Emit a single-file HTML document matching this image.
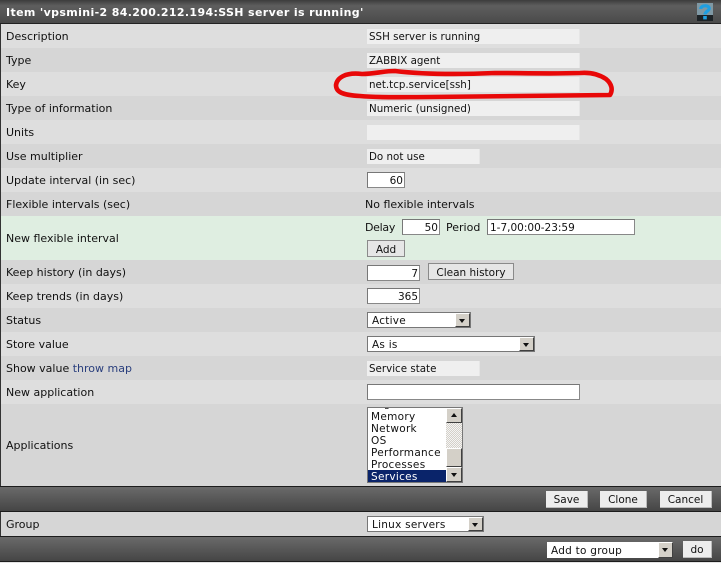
<!DOCTYPE html>
<html><head><meta charset="utf-8"><style>
html,body{margin:0;padding:0;background:#e4e4e4}
body{width:721px;height:563px;position:relative;overflow:hidden;font-family:"DejaVu Sans","Liberation Sans",sans-serif;font-size:11px;color:#111}
div{position:absolute;box-sizing:border-box;white-space:nowrap}
.r{left:1px;width:720px}
.a{background:#dedede}.b{background:#d6d6d6}
.l{left:6px;line-height:14px;margin-top:1px}
.ro{background:#efefef;left:367px;height:15px;line-height:17px;padding-left:2px;font-size:10.3px;border-right:1px solid #e6e6e6}
.in{background:#fff;border:1px solid #777;height:16px;line-height:17px;left:367px;text-align:right;padding-right:1px;font-size:10.5px;border-right-color:#888;border-bottom-color:#888}
.bar{left:0;width:721px;background:linear-gradient(#6a6a6a,#454545);border-top:1px solid #1c1c1c;border-bottom:1px solid #1c1c1c}
.btn{background:#e6e6e6;border:1px solid #8a8a8a;text-align:center;line-height:18px;height:17px;font-size:10.5px}
.bb{background:#ededed;text-align:center;line-height:19px;height:17px;font-size:10.5px;border-right:1px solid #bbb;border-bottom:1px solid #bbb}
.sel{background:#fff;border:1px solid #777;height:16px;line-height:17px;padding-left:4px;font-size:10.5px;letter-spacing:.25px}
.arr{right:0;top:0;width:15px;height:14px;background:#d4d0c8;border-right:1px solid #404040;border-bottom:1px solid #404040;border-top:1px solid #fff;border-left:1px solid #fff}
.arr:after{content:"";position:absolute;left:3px;top:5px;border:3px solid transparent;border-top:4px solid #111;border-bottom:0}
.o{left:3px;height:12px;line-height:12px;font-size:10.5px;letter-spacing:.3px}
</style></head><body>
<div style="left:0;top:0;width:721px;height:24px;background:linear-gradient(#3c3c3c,#5e5e5e 25%,#4a4a4a);border-bottom:1px solid #222"></div>
<div style="left:6px;top:5px;color:#fff;font-weight:bold;font-size:11px;line-height:15px;letter-spacing:.36px">Item 'vpsmini-2 84.200.212.194:SSH server is running'</div>
<svg style="position:absolute;left:695px;top:2px" width="20" height="20" viewBox="0 0 20 20"><rect x="2" y="1" width="16" height="12" fill="#7f98a4"/><rect x="2" y="13" width="16" height="6" fill="#1c2226"/><path d="M5.8 7C5.8 2.8 14.2 2.8 14.2 6.5C14.2 9 10 9.5 10 12.5" fill="none" stroke="#1e9fe2" stroke-width="3.2"/><rect x="8.2" y="14" width="3.6" height="3.4" fill="#1e9fe2"/></svg>

<div class="r a" style="top:24px;height:24px"></div><div class="r b" style="top:48px;height:24px"></div>
<div class="r a" style="top:72px;height:24px"></div><div class="r b" style="top:96px;height:24px"></div>
<div class="r a" style="top:120px;height:24px"></div><div class="r b" style="top:144px;height:24px"></div>
<div class="r a" style="top:168px;height:24px"></div><div class="r b" style="top:192px;height:24px"></div>
<div class="r" style="top:216px;height:44px;background:#dfeee1"></div>
<div class="r b" style="top:260px;height:24px"></div><div class="r a" style="top:284px;height:24px"></div>
<div class="r b" style="top:308px;height:24px"></div><div class="r a" style="top:332px;height:24px"></div>
<div class="r b" style="top:356px;height:24px"></div><div class="r a" style="top:380px;height:24px"></div>
<div class="r b" style="top:404px;height:82px"></div><div class="r b" style="top:511px;height:25px"></div>
<div style="left:0;top:24px;width:1px;height:538px;background:#333"></div>

<div class="l" style="top:29px">Description</div>
<div class="l" style="top:53px">Type</div>
<div class="l" style="top:77px">Key</div>
<div class="l" style="top:101px">Type of information</div>
<div class="l" style="top:125px">Units</div>
<div class="l" style="top:149px">Use multiplier</div>
<div class="l" style="top:173px">Update interval (in sec)</div>
<div class="l" style="top:197px">Flexible intervals (sec)</div>
<div class="l" style="top:231px">New flexible interval</div>
<div class="l" style="top:265px">Keep history (in days)</div>
<div class="l" style="top:289px">Keep trends (in days)</div>
<div class="l" style="top:313px">Status</div>
<div class="l" style="top:337px">Store value</div>
<div class="l" style="top:361px">Show value <span style="color:#2a3f7d">throw map</span></div>
<div class="l" style="top:385px">New application</div>
<div class="l" style="top:438px">Applications</div>
<div class="l" style="top:517px">Group</div>

<div class="ro" style="top:29px;width:213px">SSH server is running</div>
<div class="ro" style="top:53px;width:213px">ZABBIX agent</div>
<div class="ro" style="top:77px;width:213px">net.tcp.service[ssh]</div>
<div class="ro" style="top:101px;width:213px">Numeric (unsigned)</div>
<div class="ro" style="top:125px;width:213px"></div>
<div class="ro" style="top:149px;width:113px">Do not use</div>
<div class="in" style="top:172px;width:38px">60</div>
<div class="l" style="top:197px;left:365px">No flexible intervals</div>
<div class="l" style="top:220px;left:365px;letter-spacing:-.3px">Delay</div>
<div class="in" style="top:219px;left:402px;width:38px">50</div>
<div class="l" style="top:220px;left:446px">Period</div>
<div class="in" style="top:219px;left:487px;width:148px;text-align:left;padding-left:2px">1-7,00:00-23:59</div>
<div class="btn" style="left:367px;top:240px;width:38px">Add</div>
<div class="in" style="top:265px;width:53px">7</div>
<div class="btn" style="left:428px;top:263px;width:86px;line-height:19px">Clean history</div>
<div class="in" style="top:288px;width:53px">365</div>
<div class="sel" style="left:367px;top:312px;width:104px">Active<div class="arr"></div></div>
<div class="sel" style="left:367px;top:336px;width:168px">As is<div class="arr"></div></div>
<div class="ro" style="top:361px;width:113px">Service state</div>
<div class="in" style="top:384px;width:213px"></div>

<div style="left:367px;top:407px;width:96px;height:76px;background:#fff;border:1px solid #777;overflow:hidden">
<div class="o" style="top:-10px">Log files</div>
<div class="o" style="top:3px">Memory</div>
<div class="o" style="top:15px">Network</div>
<div class="o" style="top:27px">OS</div>
<div class="o" style="top:39px">Performance</div>
<div class="o" style="top:51px">Processes</div>
<div style="left:0;top:62px;width:78px;height:12px;background:#0a246a"></div>
<div class="o" style="top:63px;color:#fff">Services</div>
<div style="left:78px;top:0;width:16px;height:74px;background:repeating-conic-gradient(#d4d0c8 0 25%,#f4f4f4 0 50%) 0 0/2px 2px"></div>
<div style="left:78px;top:0;width:16px;height:15px;background:#d4d0c8;border-right:1px solid #404040;border-bottom:1px solid #404040;border-top:1px solid #fff;border-left:1px solid #fff"></div>
<div style="left:83px;top:5px;border:3px solid transparent;border-bottom:4px solid #111;border-top:0"></div>
<div style="left:78px;top:40px;width:16px;height:19px;background:#d4d0c8;border-right:1px solid #404040;border-bottom:1px solid #404040;border-top:1px solid #fff;border-left:1px solid #fff"></div>
<div style="left:78px;top:59px;width:16px;height:15px;background:#d4d0c8;border-right:1px solid #404040;border-bottom:1px solid #404040;border-top:1px solid #fff;border-left:1px solid #fff"></div>
<div style="left:83px;top:65px;border:3px solid transparent;border-top:4px solid #111;border-bottom:0"></div>
</div>

<div class="bar" style="top:486px;height:26px"></div>
<div class="bb" style="left:546px;top:491px;width:42px">Save</div>
<div class="bb" style="left:600px;top:491px;width:47px">Clone</div>
<div class="bb" style="left:660px;top:491px;width:52px">Cancel</div>
<div class="sel" style="left:367px;top:516px;width:117px">Linux servers<div class="arr"></div></div>
<div class="bar" style="top:536px;height:26px"></div>
<div class="sel" style="left:547px;top:542px;width:126px;border:0;line-height:18px">Add to group<div class="arr" style="height:16px"></div></div>
<div class="bb" style="left:683px;top:541px;width:29px">do</div>

<svg style="position:absolute;left:0;top:0" width="721" height="563" viewBox="0 0 721 563"><path d="M362 74C345 72 337 78 336 85C336 92 342 95 360 96C380 98 405 97 430 97C480 96 540 96 610 95C613 90 612 84 606 79C600 75 592 72 580 73C550 74 520 73 495 73C450 75 420 74 395 71C383 71 375 74 362 74Z" fill="none" stroke="#e80808" stroke-width="4.6" stroke-linejoin="round"/></svg>
</body></html>
